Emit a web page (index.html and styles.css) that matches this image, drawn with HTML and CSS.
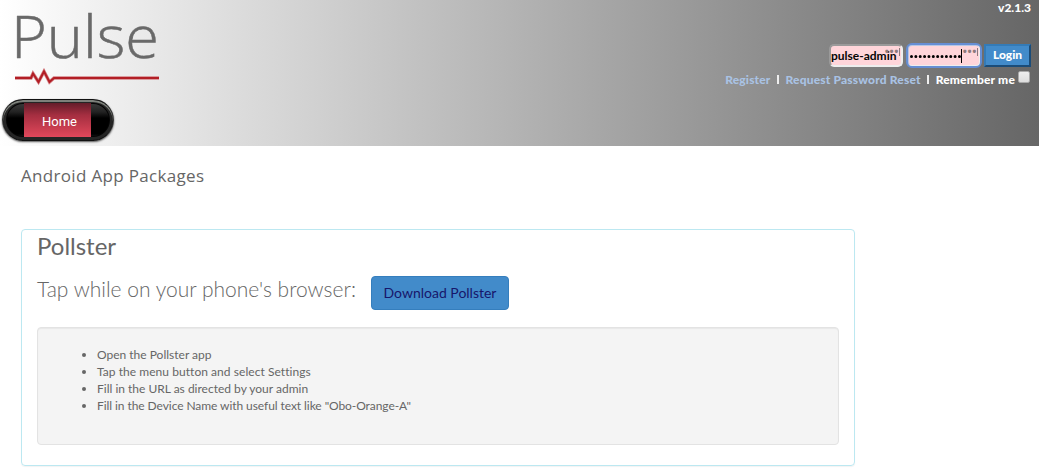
FILE: index.html
```html
<!DOCTYPE html>
<html lang="en">
<head>
<meta charset="utf-8">
<title>Pulse</title>
<link rel="stylesheet" href="styles.css">
</head>
<body>
<header class="header">
  <div class="brand">
    <svg class="logo" width="160" height="90" viewBox="0 0 160 90" role="img" aria-label="Pulse">
      <text class="logo-text" x="11" y="58" textLength="148" lengthAdjust="spacingAndGlyphs">Pulse</text>
      <path class="logo-edge" d="M15 78H31L33 73.500L38.500 82L44 71.500L49.500 82L54 78H159"/>
      <path class="logo-line" d="M15 78H31L33 73.500L38.500 82L44 71.500L49.500 82L54 78H159"/>
    </svg>
    <nav class="nav"><a class="nav-item">Home</a></nav>
  </div>
  <div class="account">
    <div class="version">v2.1.3</div>
    <form class="login">
      <div class="field">pulse-admin<span class="key">•••<i class="key-bar"></i></span></div>
      <div class="field focused"><svg class="dots" width="55" height="16" viewBox="0 0 55 16"><path class="mask" d="M2.500 8.500H51"/><path class="caret" d="M52.500 1V15"/></svg><span class="key">•••<i class="key-bar"></i></span></div>
      <button class="login-button" type="button">Login</button>
    </form>
    <div class="links"><a class="link register">Register</a><i class="bar"></i><a class="link reset">Request Password Reset</a><i class="bar"></i><span class="remember">Remember me</span><i class="checkbox"></i></div>
  </div>
</header>
<main class="main">
  <h1 class="title">Android App Packages</h1>
  <section class="panel">
    <h2 class="panel-title">Pollster</h2>
    <div class="download"><span class="prompt">Tap while on your phone's browser:</span><a class="button">Download Pollster</a></div>
    <ul class="steps">
      <li class="step">Open the Pollster app</li>
      <li class="step wide">Tap the menu button and select Settings</li>
      <li class="step">Fill in the URL as directed by your admin</li>
      <li class="step narrow">Fill in the Device Name with useful text like "Obo-Orange-A"</li>
    </ul>
  </section>
</main>
</body>
</html>
```
FILE: styles.css
```css
* { box-sizing: border-box; }
body { margin: 0; height: 475px; overflow: hidden; background: #fff; color: #666; font-family: Lato, "Open Sans", sans-serif; font-size: 12px; }
.header { height: 146px; display: flex; justify-content: space-between; background: linear-gradient(to right, #fff, #666); }
.logo { display: block; overflow: visible; }
.logo-text { font: 300 58px "Open Sans", sans-serif; fill: #696969; stroke: #696969; stroke-width: .5; }
.logo-line { fill: none; stroke: #b21e25; stroke-width: 2; }
.logo-edge { fill: none; stroke: #d58286; stroke-width: 3.4; }
.nav { width: 112px; height: 42px; margin: 9px 0 0 2px; padding: 4px 22px; border-radius: 21px; background: linear-gradient(#444 0, #222 30%, #000 45%, #000 85%, #333); border: 1px solid #111; border-left-color: #333; border-right-color: #333; box-shadow: inset 0 2px 0 #7d817b, inset 0 0 0 3px #252525, inset 0 0 0 4px #050505, 0 1px 2px rgba(0,0,0,.65); }
.nav-item { display: block; width: 67px; height: 34px; margin: -1px 0 0 -1px; line-height: 37px; text-align: center; padding-left: 4px; color: #fff; font-size: 13px; font-family: Roboto, sans-serif; background: linear-gradient(#641d2a, #a42e40 35%, #e2485b); }
.account { width: 340px; padding-right: 8px; display: flex; flex-direction: column; color: #fff; font-weight: 900; }
.version { height: 43px; padding-top: 1px; line-height: 14px; text-align: right; font-size: 12px; }
.login { display: flex; justify-content: flex-end; height: 25px; padding-top: 1px; }
.field { position: relative; width: 74px; height: 23px; margin-right: 4px; border: 2px solid; border-color: #9a9a9a #eee #eee #9a9a9a; border-radius: 5px; background: #ffd5da; color: #050505; font-size: 12px; font-weight: 700; line-height: 19px; white-space: nowrap; }
.focused { outline: 2px solid #668ed4; outline-offset: -1px; margin-right: 3px; border-color: #b8c7e5 #eee #eee #b8c7e5; }
.key { position: absolute; right: 1px; top: -5px; display: flex; align-items: center; color: #8d7a7d; font: 700 11px/20px "Open Sans", sans-serif; letter-spacing: .6px; }
.key-bar { width: 1px; height: 8px; margin-top: 1px; background: #8d7a7d; }
.dots { display: block; margin-top: 2px; }
.mask { stroke: #000; stroke-width: 3; stroke-linecap: round; stroke-dasharray: 0 4.36; fill: none; }
.caret { stroke: #000; stroke-width: 1; }
.login-button { width: 47px; height: 23px; padding: 0 0 2px; border: 2px solid; border-color: #347bb7 #1b4c78 #1b4c78 #347bb7; background: #428bca; color: #fff; font: 900 12px Lato, sans-serif; }
.links { display: flex; align-items: center; justify-content: flex-end; height: 23px; line-height: 22px; white-space: nowrap; letter-spacing: .17px; }
.link { color: #a9c2e3; }
.bar { width: 2px; height: 9px; margin: 0 6.500px; background: #eee; }
.checkbox { width: 12px; height: 12px; margin: -5px 1px 0 3px; border: 1px solid #aaa; border-radius: 2px; background: linear-gradient(#eee, #ddd); }
.main { padding: 18px 21px 0; }
.title { margin: 0; height: 65px; font: 400 17px/24px "Open Sans", sans-serif; letter-spacing: .32px; }
.panel { width: 834px; height: 237px; padding: 0 15px; border: 1px solid #bce8f1; border-radius: 4px; box-shadow: 0 1px 1px rgba(0,0,0,.05); }
.panel-title { margin: 0; height: 46px; font-size: 24px; font-weight: 400; line-height: 31px; }
.download { display: flex; height: 51px; }
.prompt { width: 334px; font-size: 21px; line-height: 25px; font-weight: 300; white-space: nowrap; }
.button { width: 138px; height: 34px; border: 1px solid #357ebd; border-radius: 4px; background: #428bca; color: #17166b; text-align: center; font-size: 14px; line-height: 31px; white-space: nowrap; }
.steps { margin: 0; height: 118px; padding: 18px 0 0 59px; border: 1px solid #e3e3e3; border-radius: 4px; background: #f4f4f4; box-shadow: inset 0 1px 1px rgba(0,0,0,.05); }
.step { height: 17px; width: max-content; line-height: 17px; }
.wide { letter-spacing: .05px; }
.narrow { letter-spacing: -.07px; }
```
